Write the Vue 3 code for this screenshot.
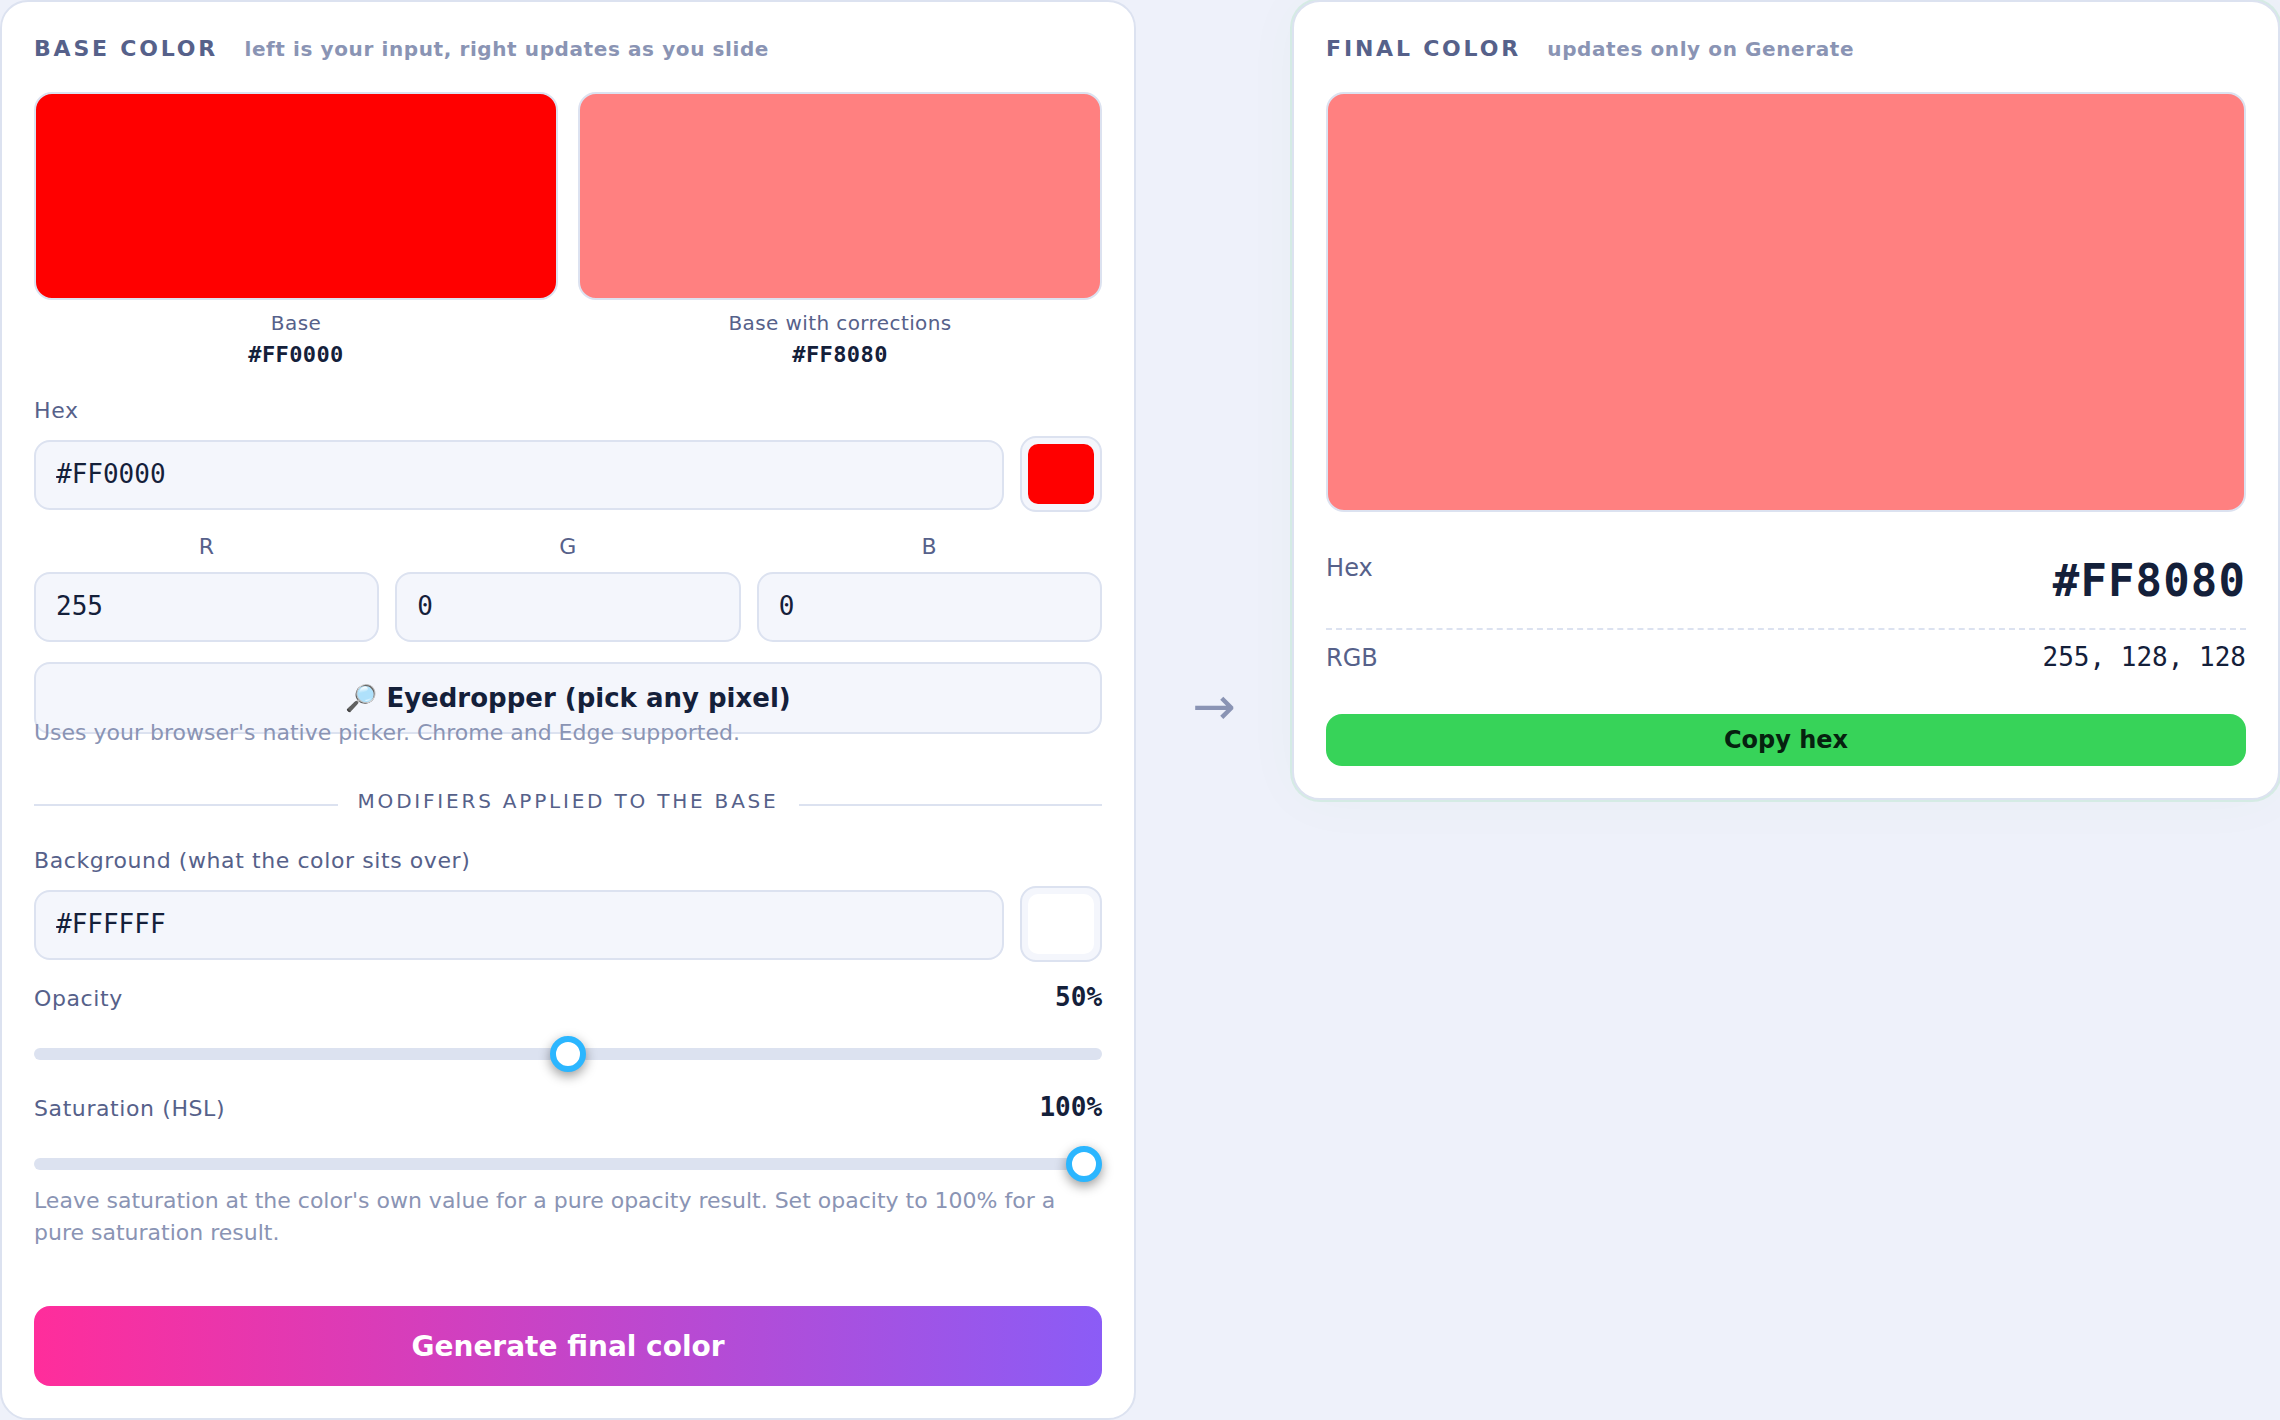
<script setup>
import { ref, computed } from 'vue'

const base = ref('#FF0000')
const background = ref('#FFFFFF')
const opacity = ref(50)
const saturation = ref(100)
const channels = ['R', 'G', 'B']

const toRgb = (hex) => [1, 3, 5].map((i) => parseInt(hex.slice(i, i + 2), 16) || 0)
const toHex = (rgb) => '#' + rgb.map((v) => v.toString(16).padStart(2, '0')).join('').toUpperCase()

const baseRgb = computed(() => toRgb(base.value))

function setChannel(index, value) {
  const next = [...baseRgb.value]
  next[index] = Math.max(0, Math.min(255, Number(value) || 0))
  base.value = toHex(next)
}

// Scale the HSL saturation around the lightness, then blend over the background.
const corrected = computed(() => {
  const rgb = baseRgb.value
  const middle = (Math.max(...rgb) + Math.min(...rgb)) / 2
  const s = saturation.value / 100
  const a = opacity.value / 100
  const under = toRgb(background.value)
  return rgb.map((v, i) => Math.round((middle + (v - middle) * s) * a + under[i] * (1 - a)))
})
const correctedHex = computed(() => toHex(corrected.value))

const finalRgb = ref([...corrected.value])
const finalHex = computed(() => toHex(finalRgb.value))

function generate() {
  finalRgb.value = [...corrected.value]
}
async function pick() {
  if (!window.EyeDropper) return
  const result = await new window.EyeDropper().open()
  base.value = result.sRGBHex.toUpperCase()
}
function copyHex() {
  navigator.clipboard?.writeText(finalHex.value)
}
</script>

<template>
  <main class="layout">
    <section class="card">
      <h2 class="title">Base color <span class="note">left is your input, right updates as you slide</span></h2>

      <div class="previews">
        <figure class="preview">
          <div class="swatch" :style="{ backgroundColor: base }"></div>
          <figcaption>Base<strong class="code">{{ base }}</strong></figcaption>
        </figure>
        <figure class="preview">
          <div class="swatch" :style="{ backgroundColor: correctedHex }"></div>
          <figcaption>Base with corrections<strong class="code">{{ correctedHex }}</strong></figcaption>
        </figure>
      </div>

      <label class="label" for="base-hex">Hex</label>
      <div class="color-row">
        <input id="base-hex" v-model="base" class="field" type="text" />
        <input class="picker" type="color" aria-label="Pick base color" :value="base.toLowerCase()" @input="base = $event.target.value.toUpperCase()" />
      </div>

      <div class="channels">
        <div v-for="(name, i) in channels" :key="name" class="channel">
          <label class="label" :for="'channel-' + name">{{ name }}</label>
          <input :id="'channel-' + name" class="field" type="text" inputmode="numeric" :value="baseRgb[i]" @change="setChannel(i, $event.target.value)" />
        </div>
      </div>

      <button class="eyedropper" type="button" @click="pick">🔎 Eyedropper (pick any pixel)</button>
      <p class="hint picker-hint">Uses your browser's native picker. Chrome and Edge supported.</p>

      <h3 class="divider"><span>Modifiers applied to the base</span></h3>

      <label class="label" for="background-hex">Background (what the color sits over)</label>
      <div class="color-row">
        <input id="background-hex" v-model="background" class="field" type="text" />
        <input class="picker" type="color" aria-label="Pick background color" :value="background.toLowerCase()" @input="background = $event.target.value.toUpperCase()" />
      </div>

      <div class="slider">
        <div class="slider-head">
          <label class="label" for="opacity">Opacity</label>
          <output for="opacity">{{ opacity }}%</output>
        </div>
        <input id="opacity" v-model.number="opacity" type="range" min="0" max="100" />
      </div>
      <div class="slider">
        <div class="slider-head">
          <label class="label" for="saturation">Saturation (HSL)</label>
          <output for="saturation">{{ saturation }}%</output>
        </div>
        <input id="saturation" v-model.number="saturation" type="range" min="0" max="100" />
      </div>
      <p class="hint slider-hint">Leave saturation at the color's own value for a pure opacity result. Set opacity to 100% for a pure saturation result.</p>

      <button class="generate" type="button" @click="generate">Generate final color</button>
    </section>

    <div class="arrow" aria-hidden="true">→</div>

    <section class="card final">
      <h2 class="title">Final color <span class="note">updates only on Generate</span></h2>
      <div class="swatch large" :style="{ backgroundColor: finalHex }"></div>
      <dl class="values">
        <div class="value-row hex-row">
          <dt>Hex</dt>
          <dd>{{ finalHex }}</dd>
        </div>
        <div class="value-row rgb-row">
          <dt>RGB</dt>
          <dd>{{ finalRgb.join(', ') }}</dd>
        </div>
      </dl>
      <button class="copy" type="button" @click="copyHex">Copy hex</button>
    </section>
  </main>
</template>

<style>
body {
  margin: 0;
  background: #eef1fa;
  overflow-x: hidden;
}
</style>

<style scoped>
.layout {
  --line: #dce2f0;
  --ink: #14203a;
  --muted: #56618a;
  --faint: #8a94b4;
  --fill: #f4f6fc;
  --mono: "DejaVu Sans Mono", monospace;
  display: grid;
  grid-template-columns: minmax(0, 1.15fr) 84px minmax(0, 1fr);
  gap: 36px;
  align-items: start;
  color: var(--ink);
  font-family: "DejaVu Sans", sans-serif;
  font-size: 22px;
  line-height: 32px;
}
.layout *,
.layout *::before,
.layout *::after {
  box-sizing: border-box;
}
.card {
  padding: 32px;
  border: 2px solid var(--line);
  border-radius: 28px;
  background: #fff;
}
.final {
  box-shadow: 0 0 0 2px rgba(52, 209, 88, 0.12), 0 0 60px rgba(40, 120, 60, 0.03);
}
.title {
  margin: 0 0 28px;
  color: var(--muted);
  font-size: 22px;
  line-height: 30px;
  letter-spacing: 0.127em;
  text-transform: uppercase;
}
.note {
  margin-left: 16px;
  color: var(--faint);
  font-size: 20px;
  letter-spacing: 0.03em;
  text-transform: none;
}
.previews {
  display: grid;
  grid-template-columns: 1fr 1fr;
  gap: 20px;
  margin-bottom: 22px;
}
.preview {
  margin: 0;
}
.swatch {
  height: 208px;
  border: 2px solid var(--line);
  border-radius: 18px;
}
.swatch.large {
  height: 420px;
}
figcaption {
  margin-top: 8px;
  color: var(--muted);
  font-size: 20px;
  line-height: 30px;
  letter-spacing: 0.02em;
  text-align: center;
}
.code {
  display: block;
  color: var(--ink);
  font-family: var(--mono);
  font-size: 22px;
  line-height: 34px;
}
.label {
  display: block;
  color: var(--muted);
  line-height: 34px;
  letter-spacing: 0.027em;
}
.color-row {
  display: flex;
  align-items: center;
  gap: 16px;
  margin-top: 8px;
}
.field {
  width: 100%;
  min-width: 0;
  height: 70px;
  margin: 0;
  padding: 17px 20px 19px;
  border: 2px solid var(--line);
  border-radius: 16px;
  background: var(--fill);
  color: var(--ink);
  font-family: var(--mono);
  font-size: 26px;
}
.color-row .field {
  margin-top: 2px;
}
.picker {
  flex: none;
  width: 82px;
  height: 76px;
  margin: 0;
  padding: 6px;
  border: 2px solid var(--line);
  border-radius: 16px;
  background: var(--fill);
  appearance: none;
}
.picker::-webkit-color-swatch-wrapper {
  padding: 0;
}
.picker::-webkit-color-swatch {
  border: 0;
  border-radius: 10px;
}
.channels {
  display: grid;
  grid-template-columns: repeat(3, 1fr);
  gap: 16px;
  margin-top: 18px;
}
.channel .label {
  margin-bottom: 8px;
  text-align: center;
}
button {
  display: block;
  width: 100%;
  margin: 0;
  padding: 0;
  border: 0;
  border-radius: 16px;
  font-family: inherit;
  font-weight: 700;
  cursor: pointer;
}
.eyedropper {
  height: 72px;
  margin-top: 20px;
  border: 2px solid var(--line);
  background: var(--fill);
  color: var(--ink);
  font-size: 26px;
}
.hint {
  margin: 0;
  color: var(--faint);
}
.picker-hint {
  position: relative;
  margin-top: -17px;
}
.divider {
  display: flex;
  gap: 20px;
  margin: 37px 0 28px;
  color: var(--muted);
  font-size: 20px;
  font-weight: 400;
  line-height: 30px;
  letter-spacing: 0.14em;
  text-transform: uppercase;
}
.divider::before,
.divider::after {
  content: "";
  flex: 1;
  height: 20px;
  border-bottom: 2px solid var(--line);
}
.slider {
  margin-top: 16px;
}
.slider-head {
  display: flex;
  align-items: baseline;
  justify-content: space-between;
  height: 38px;
  margin-bottom: 20px;
}
output {
  font-family: var(--mono);
  font-size: 26px;
  font-weight: 700;
  line-height: 38px;
}
input[type="range"] {
  display: block;
  width: 100%;
  height: 36px;
  margin: 0;
  background: transparent;
  appearance: none;
}
input[type="range"]::-webkit-slider-runnable-track {
  height: 12px;
  border-radius: 6px;
  background: var(--line);
}
input[type="range"]::-webkit-slider-thumb {
  width: 36px;
  height: 36px;
  margin-top: -12px;
  border: 6px solid #2bb6ff;
  border-radius: 50%;
  background: #fff;
  box-shadow: 0 4px 12px rgba(0, 0, 0, 0.4);
  appearance: none;
}
.slider-hint {
  margin-top: 3px;
}
.generate {
  height: 80px;
  margin-top: 57px;
  background: linear-gradient(90deg, #ff2d9b, #8b5cf6);
  color: #fff;
  font-size: 28px;
}
.arrow {
  align-self: center;
  padding-bottom: 8px;
  color: var(--faint);
  font-size: 52px;
  line-height: 60px;
  text-align: center;
}
.values {
  margin: 36px 0;
}
.value-row {
  display: flex;
  justify-content: space-between;
}
dt {
  color: var(--muted);
  font-size: 24px;
  line-height: 40px;
}
dd {
  margin: 0;
  font-family: var(--mono);
  font-size: 26px;
  line-height: 38px;
}
.hex-row {
  padding-bottom: 14px;
  border-bottom: 2px dashed var(--line);
}
.hex-row dd {
  font-size: 44px;
  font-weight: 700;
  line-height: 66px;
  letter-spacing: 0.025em;
}
.rgb-row {
  align-items: baseline;
  padding-top: 8px;
}
.copy {
  height: 52px;
  background: #37d359;
  color: #06210f;
  font-size: 24px;
}
</style>
